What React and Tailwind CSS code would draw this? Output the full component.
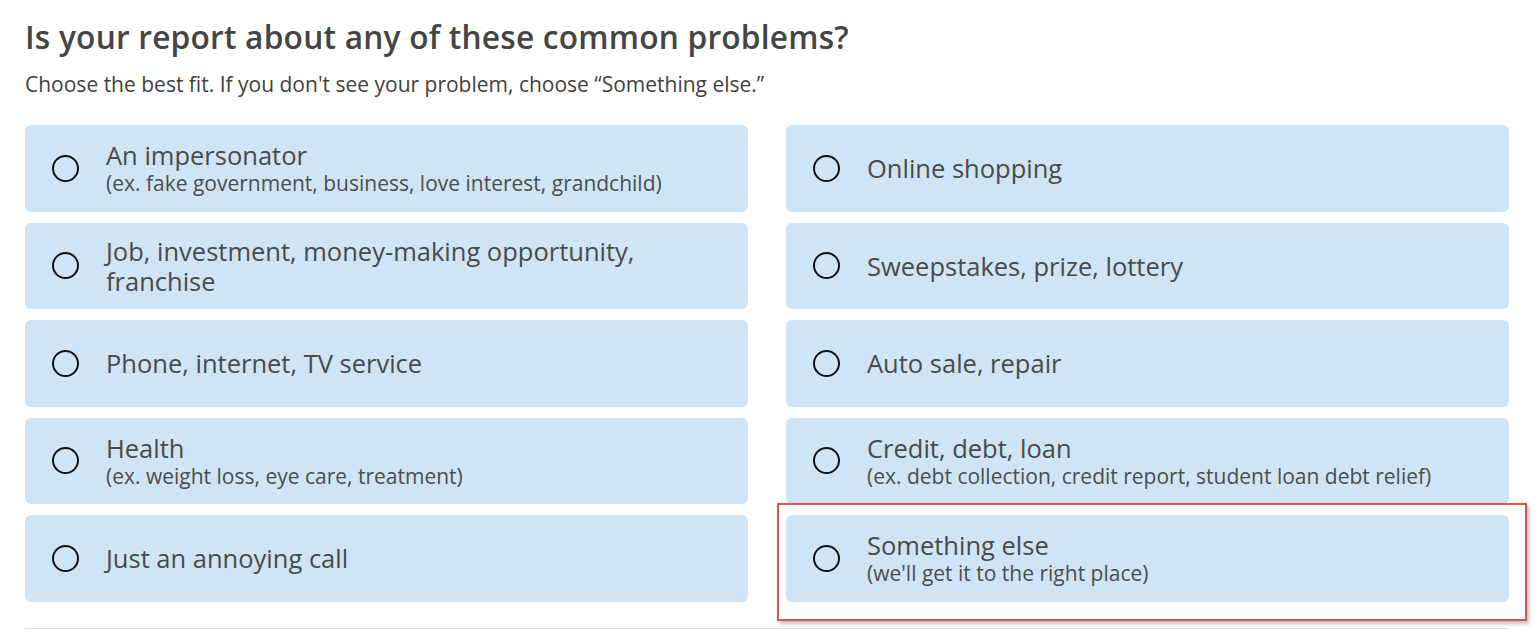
import React from 'react';

const options = [
    {title: 'An impersonator', sub: '(ex. fake government, business, love interest, grandchild)'},
    {title: 'Online shopping'},
    {title: 'Job, investment, money-making opportunity, franchise'},
    {title: 'Sweepstakes, prize, lottery'},
    {title: 'Phone, internet, TV service'},
    {title: 'Auto sale, repair'},
    {title: 'Health', sub: '(ex. weight loss, eye care, treatment)'},
    {title: 'Credit, debt, loan', sub: '(ex. debt collection, credit report, student loan debt relief)'},
    {title: 'Just an annoying call'},
    {title: 'Something else', sub: "(we'll get it to the right place)", marked: true},
];

function Option({title, sub, marked}) {
    return (
        <label className="relative flex items-center h-[86.5px] rounded-[6px] bg-[#cfe5f5] pl-[27px] pr-6 cursor-pointer">
            <span className="shrink-0 w-[27px] h-[27px] rounded-full border-[2.5px] border-[#111] bg-transparent"></span>
            <span className="ml-[27px] flex flex-col text-[#4a4a4a]">
                <span className="text-[25.5px] leading-[30px] max-w-[580px]">{title}</span>
                {sub && <span className="text-[21px] leading-[26px] text-[#4d4d4d]">{sub}</span>}
            </span>
            {/* red annotation box drawn over the card */}
            {marked && <span className="absolute -top-[12px] -left-[9px] -right-[18px] -bottom-[19px] border-[2.5px] border-[#d9534f] shadow-[2px_3px_4px_rgba(0,0,0,0.25)] pointer-events-none"></span>}
        </label>
    );
}

export default function App() {
    return (
        <div className="w-[1540px] h-[632px] bg-white overflow-hidden font-['Open_Sans',sans-serif]">
            <div className="pl-[25px] pr-[31px] pt-[17px]">
                <h2 className="text-[31.7px] leading-[40px] font-semibold text-[#454545] tracking-[0.2px]">
                    Is your report about any of these common problems?
                </h2>
                <p className="mt-[13px] text-[21px] leading-[28px] text-[#3f3f3f]">
                    Choose the best fit. If you don't see your problem, choose “Something else.”
                </p>
                <div className="mt-[27px] grid grid-cols-2 gap-x-[38px] gap-y-[11px]">
                    {options.map((o) => <Option key={o.title} {...o} />)}
                </div>
                <div className="mt-[26px] border-t border-[#e2e2e2]"></div>
            </div>
        </div>
    );
}
